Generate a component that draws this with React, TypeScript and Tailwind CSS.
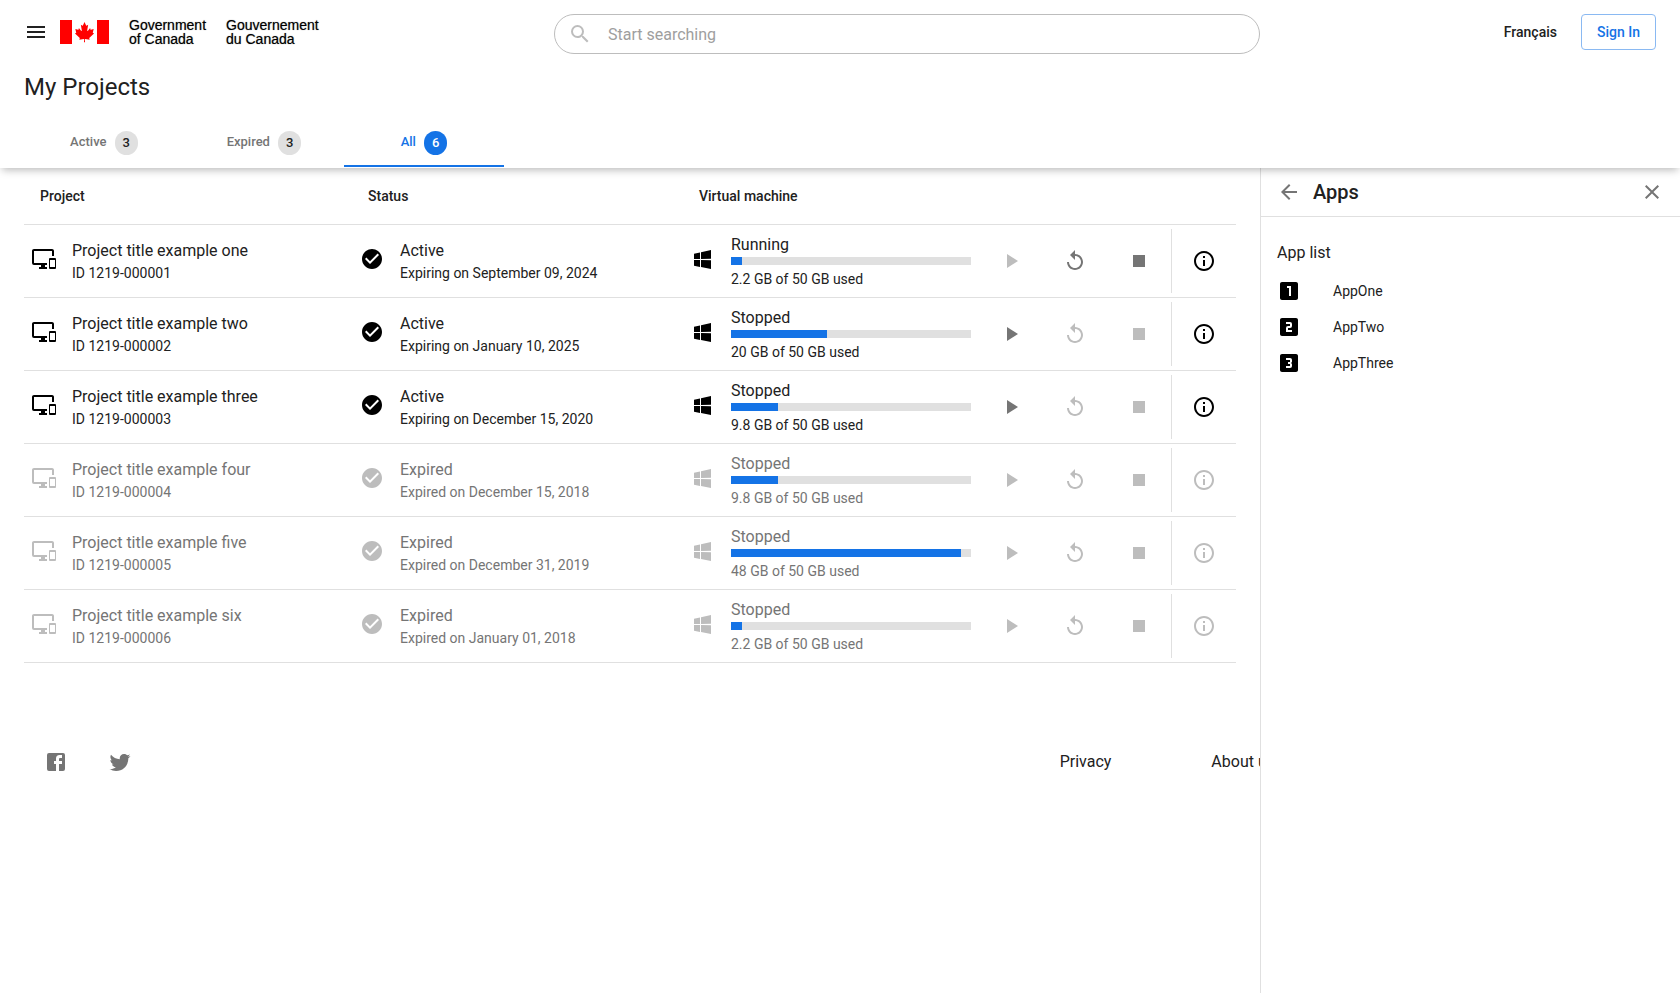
import { useState, type ReactNode } from "react";
import {
  MdArrowBack,
  MdCheckCircle,
  MdClose,
  MdInfoOutline,
  MdLooks3,
  MdLooksOne,
  MdLooksTwo,
  MdMenu,
  MdPlayArrow,
  MdReplay,
  MdSearch,
  MdStop,
} from "react-icons/md";

type Project = {
  title: string;
  id: string;
  active: boolean;
  date: string;
  running: boolean;
  used: number;
};

const projects: Project[] = [
  { title: "Project title example one", id: "1219-000001", active: true, date: "Expiring on September 09, 2024", running: true, used: 2.2 },
  { title: "Project title example two", id: "1219-000002", active: true, date: "Expiring on January 10, 2025", running: false, used: 20 },
  { title: "Project title example three", id: "1219-000003", active: true, date: "Expiring on December 15, 2020", running: false, used: 9.8 },
  { title: "Project title example four", id: "1219-000004", active: false, date: "Expired on December 15, 2018", running: false, used: 9.8 },
  { title: "Project title example five", id: "1219-000005", active: false, date: "Expired on December 31, 2019", running: false, used: 48 },
  { title: "Project title example six", id: "1219-000006", active: false, date: "Expired on January 01, 2018", running: false, used: 2.2 },
];

const CAPACITY = 50;

const apps = [
  { name: "AppOne", icon: MdLooksOne },
  { name: "AppTwo", icon: MdLooksTwo },
  { name: "AppThree", icon: MdLooks3 },
];

function PathIcon({ d }: { d: string }) {
  return (
    <svg viewBox="0 0 24 24" fill="currentColor" aria-hidden="true" className="size-6 shrink-0">
      <path d={d} />
    </svg>
  );
}

const MONITOR =
  "M23,11H18A1,1 0 0,0 17,12V21A1,1 0 0,0 18,22H23A1,1 0 0,0 24,21V12A1,1 0 0,0 23,11M23,20H18V13H23V20M20,2H2C0.89,2 0,2.89 0,4V16A2,2 0 0,0 2,18H9V20H7V22H15V20H13V18H15V16H2V4H20V9H22V4C22,2.89 21.1,2 20,2Z";
const WINDOWS =
  "M3,12V6.75L9,5.43V11.91L3,12M20,3V11.75L10,11.9V5.21L20,3M3,13L9,13.09V19.9L3,18.75V13M20,13.25V22L10,20.09V13.1L20,13.25Z";
const FACEBOOK =
  "M5,3H19A2,2 0 0,1 21,5V19A2,2 0 0,1 19,21H5A2,2 0 0,1 3,19V5A2,2 0 0,1 5,3M18,5H15.5A3.5,3.5 0 0,0 12,8.5V11H10V14H12V21H15V14H18V11H15V9A1,1 0 0,1 16,8H18V5Z";
const TWITTER =
  "M22.46,6C21.69,6.35 20.86,6.58 20,6.69C20.88,6.16 21.56,5.32 21.88,4.31C21.05,4.81 20.13,5.16 19.16,5.36C18.37,4.5 17.26,4 16,4C13.65,4 11.73,5.92 11.73,8.29C11.73,8.63 11.77,8.96 11.84,9.27C8.28,9.09 5.11,7.38 3,4.79C2.63,5.42 2.42,6.16 2.42,6.94C2.42,8.43 3.17,9.75 4.33,10.5C3.62,10.5 2.96,10.3 2.38,10C2.38,10 2.38,10 2.38,10.03C2.38,12.11 3.86,13.85 5.82,14.24C5.46,14.34 5.08,14.39 4.69,14.39C4.42,14.39 4.15,14.36 3.89,14.31C4.43,16 6,17.26 7.89,17.29C6.43,18.45 4.58,19.13 2.56,19.13C2.22,19.13 1.88,19.11 1.54,19.07C3.44,20.29 5.7,21 8.12,21C16,21 20.33,14.46 20.33,8.79C20.33,8.6 20.33,8.42 20.32,8.23C21.16,7.63 21.88,6.87 22.46,6Z";

function Flag() {
  return (
    <svg viewBox="0 0 49 24" role="img" aria-label="Flag of Canada" className="h-6 w-[49px] shrink-0">
      <g fill="#ff0000">
        <rect width="12" height="24" />
        <rect x="37" width="12" height="24" />
        <path
          transform="translate(2.7 0) scale(0.89 1)"
          d="M24.5 2 22.7 5.4C22.5 5.8 22.1 5.7 21.8 5.5L20.4 4.8 21.4 10.1C21.6 11.1 21 11.1 20.6 10.7L18.2 8 17.8 9.4C17.7 9.6 17.5 9.7 17.2 9.7L14.2 9 15 11.9C15.2 12.5 15.3 12.8 14.8 13L13.8 13.5 18.9 17.7C19.1 17.9 19.2 18.1 19.1 18.4L18.7 19.8 23.6 19.1C23.9 19.1 24.1 19.2 24.1 19.5L23.9 22.3H25.1L24.9 19.5C24.9 19.2 25.1 19.1 25.4 19.1L30.3 19.8 29.9 18.4C29.8 18.1 29.9 17.9 30.1 17.7L35.2 13.5 34.2 13C33.7 12.8 33.8 12.5 34 11.9L34.8 9 31.8 9.7C31.5 9.7 31.3 9.6 31.2 9.4L30.8 8 28.4 10.7C28 11.1 27.4 11.1 27.6 10.1L28.6 4.8 27.2 5.5C26.9 5.7 26.5 5.8 26.3 5.4Z"
        />
      </g>
    </svg>
  );
}

function VmButton({ label, enabled, children }: { label: string; enabled: boolean; children: ReactNode }) {
  return (
    <button
      type="button"
      aria-label={label}
      disabled={!enabled}
      className="flex h-12 w-16 items-center justify-center text-[#757575] disabled:text-[#bdbdbd]"
    >
      {children}
    </button>
  );
}

function ProjectRow({ project }: { project: Project }) {
  const { title, id, active, date, running, used } = project;
  const text = active ? "text-[#212121]" : "text-[#757575]";
  const icon = active ? "text-black" : "text-[#bdbdbd]";
  return (
    <tr className={`h-[73px] border-b border-[#e0e0e0] ${text}`}>
      <td className="pl-2">
        <div className="flex items-center gap-4">
          <span className={`pb-1 ${icon}`}>
            <PathIcon d={MONITOR} />
          </span>
          <div>
            <div className="text-base leading-6">{title}</div>
            <div className="text-sm leading-5">ID {id}</div>
          </div>
        </div>
      </td>
      <td className="pl-2">
        <div className="flex items-center gap-4">
          <span className={`pb-1 ${icon}`}>
            <MdCheckCircle className="size-6" />
          </span>
          <div>
            <div className="text-base leading-6">{active ? "Active" : "Expired"}</div>
            <div className="text-sm leading-5">{date}</div>
          </div>
        </div>
      </td>
      <td className="px-2">
        <div className="flex items-center gap-4">
          <span className={`pb-1 ${icon}`}>
            <PathIcon d={WINDOWS} />
          </span>
          <div className="flex-1">
            <div className="text-base leading-6">{running ? "Running" : "Stopped"}</div>
            <div
              role="progressbar"
              aria-label="Storage used"
              aria-valuemin={0}
              aria-valuemax={CAPACITY}
              aria-valuenow={used}
              className="h-2 bg-[#e0e0e0]"
            >
              <div className="h-full bg-[#1473e6]" style={{ width: `${(used / CAPACITY) * 100}%` }} />
            </div>
            <div className="mt-1 text-sm leading-5">
              {used} GB of {CAPACITY} GB used
            </div>
          </div>
        </div>
      </td>
      <td>
        <div className="flex">
          <VmButton label={`Start ${title}`} enabled={active && !running}>
            <MdPlayArrow className="size-6" />
          </VmButton>
          <VmButton label={`Restart ${title}`} enabled={active && running}>
            <MdReplay className="size-6" />
          </VmButton>
          <VmButton label={`Stop ${title}`} enabled={active && running}>
            <MdStop className="size-6" />
          </VmButton>
        </div>
      </td>
      <td>
        <div className="flex h-16 items-center justify-center border-l border-[#e0e0e0]">
          <button type="button" aria-label={`Details of ${title}`} disabled={!active} className={`p-3 ${icon}`}>
            <MdInfoOutline className="size-6" />
          </button>
        </div>
      </td>
    </tr>
  );
}

export default function App() {
  const [tab, setTab] = useState("All");
  const tabs = [
    { name: "Active", rows: projects.filter((p) => p.active) },
    { name: "Expired", rows: projects.filter((p) => !p.active) },
    { name: "All", rows: projects },
  ];
  const rows = tabs.find((t) => t.name === tab)?.rows ?? projects;

  return (
    <div className="flex min-h-screen flex-col bg-white font-[Roboto,'Liberation_Sans',sans-serif] text-[#212121]">
      <header className="relative z-10 bg-white px-6 pb-px shadow-[0_4px_8px_-2px_rgba(0,0,0,0.28)]">
        <div className="flex h-16 items-center">
          <div className="flex w-[530px] shrink-0 items-center">
            <button type="button" aria-label="Menu" className="mr-3">
              <MdMenu className="size-6" />
            </button>
            <Flag />
            <div className="ml-5 flex gap-5 font-['Liberation_Sans',Arial,sans-serif] text-sm leading-[14px] whitespace-nowrap text-black [text-shadow:0_0_1px_rgba(0,0,0,0.5)]">
              <div>
                Government
                <br />
                of Canada
              </div>
              <div>
                Gouvernement
                <br />
                du Canada
              </div>
            </div>
          </div>
          <label className="mt-1 flex h-10 min-w-0 flex-1 items-center gap-4 rounded-full border border-[#bdbdbd] pr-4 pl-[13px]">
            <MdSearch className="size-6 shrink-0 text-[#bdbdbd]" />
            <input
              type="search"
              aria-label="Search"
              placeholder="Start searching"
              className="min-w-0 flex-1 pt-0.5 text-base outline-none placeholder:text-[#9e9e9e]"
            />
          </label>
          <div className="flex w-[396px] shrink-0 items-center justify-end gap-6 text-sm font-medium">
            <a href="#fr">Français</a>
            <button type="button" className="h-9 rounded border border-[#8ab9f2] px-[15px] text-[#1473e6]">
              Sign In
            </button>
          </div>
        </div>
        <h1 className="pb-2 text-2xl leading-[47px]">My Projects</h1>
        <div role="tablist" className="flex">
          {tabs.map(({ name, rows: items }) => {
            const selected = name === tab;
            return (
              <button
                key={name}
                type="button"
                role="tab"
                aria-selected={selected}
                onClick={() => setTab(name)}
                className={`flex h-12 w-40 items-center justify-center gap-2 border-b-2 pt-0.5 text-[13px] font-medium ${
                  selected ? "border-[#1473e6] text-[#1473e6]" : "border-transparent text-[#757575]"
                }`}
              >
                <span className="pb-0.5">{name}</span>
                <span
                  className={`rounded-xl px-2 leading-6 ${
                    selected ? "bg-[#1473e6] text-white" : "bg-[#e0e0e0] text-[#212121]"
                  }`}
                >
                  {items.length}
                </span>
              </button>
            );
          })}
        </div>
      </header>

      <div className="flex flex-1">
        <main className="min-w-0 flex-1 overflow-hidden px-6">
          <table className="w-full table-fixed border-collapse">
            <colgroup>
              <col className="w-[328px]" />
              <col />
              <col className="w-[296px]" />
              <col className="w-48" />
              <col className="w-[65px]" />
            </colgroup>
            <thead>
              <tr className="h-14 border-b border-[#e0e0e0] text-left text-sm leading-5">
                <th className="pl-4 font-medium">Project</th>
                <th className="pl-4 font-medium">Status</th>
                <th className="pl-4 font-medium" colSpan={3}>
                  Virtual machine
                </th>
              </tr>
            </thead>
            <tbody>
              {rows.map((p) => (
                <ProjectRow key={p.id} project={p} />
              ))}
            </tbody>
          </table>
          <footer className="mt-[75px] -mr-[39px] flex h-12 items-center justify-between">
            <div className="flex text-[#757575]">
              <a href="#facebook" aria-label="Facebook" className="flex w-16 justify-center">
                <PathIcon d={FACEBOOK} />
              </a>
              <a href="#twitter" aria-label="Twitter" className="flex w-16 justify-center">
                <PathIcon d={TWITTER} />
              </a>
            </div>
            <nav className="flex gap-[100px] text-base whitespace-nowrap">
              <a href="#privacy">Privacy</a>
              <a href="#about">About us</a>
            </nav>
          </footer>
        </main>

        <aside className="w-1/4 shrink-0 border-l border-[#e0e0e0] bg-white">
          <div className="flex h-[49px] items-center border-b border-[#e0e0e0] px-4">
            <button type="button" aria-label="Back" className="text-[#757575]">
              <MdArrowBack className="size-6" />
            </button>
            <h2 className="ml-3 flex-1 text-xl font-medium">Apps</h2>
            <button type="button" aria-label="Close" className="text-[#757575]">
              <MdClose className="size-6" />
            </button>
          </div>
          <div className="px-4 pt-6">
            <h3 className="text-base leading-6">App list</h3>
            <ul className="pt-2">
              {apps.map(({ name, icon: Icon }) => (
                <li key={name} className="flex h-9 items-center gap-8 text-sm">
                  <Icon className="size-6 text-black" />
                  {name}
                </li>
              ))}
            </ul>
          </div>
        </aside>
      </div>
    </div>
  );
}
